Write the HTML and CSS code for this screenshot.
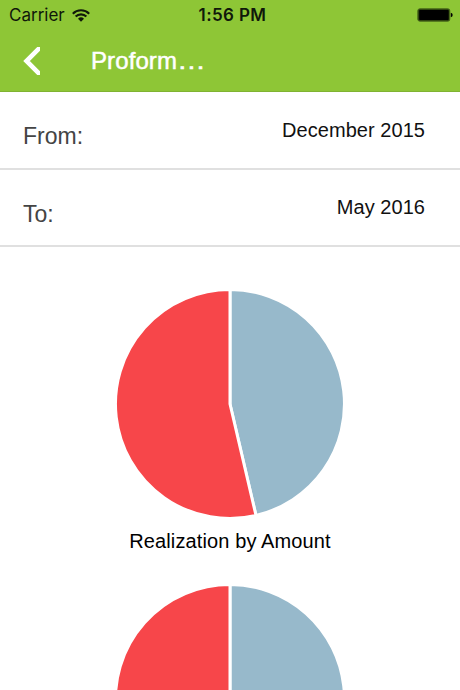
FILE: index.html
```html
<!DOCTYPE html>
<html lang="en">
<head>
  <meta charset="UTF-8">
  <meta name="viewport" content="width=device-width, initial-scale=1.0">
  <title>Proforma</title>

  <link rel="stylesheet" href="styles.css">
</head>
<body>
  <header class="header">
    <div class="status-bar">
      <div class="carrier">
        <span>Carrier</span>
        <svg class="wifi" width="18" height="13" viewBox="0 0 18 13" fill="none" stroke="#10180a" stroke-width="2.1">
          <path d="M0.8 4.7a11.6 11.6 0 0 1 16.4 0"/>
          <path d="M3.6 7.6a7.6 7.6 0 0 1 10.8 0"/>
          <path d="M6 9.7a4.3 4.3 0 0 1 6 0L9 12.8z" fill="#10180a" stroke="none"/>
        </svg>
      </div>
      <div class="time">1:56 PM</div>
      <svg class="battery" width="36" height="14" viewBox="0 0 36 14">
        <rect x="0.8" y="0.8" width="32" height="12.4" rx="2" fill="#26380c" stroke="#4a6a1b" stroke-width="1"/>
        <rect x="2.2" y="2" width="29.4" height="10" rx="0.8" fill="#000"/>
        <path d="M33.8 4.7q1.9 0.6 1.9 2.3t-1.9 2.3z" fill="#000"/>
      </svg>
    </div>
    <div class="nav-bar">
      <svg class="back" width="17" height="28" viewBox="0 0 17 28">
        <path d="M18 -0.5L3.5 14L18 28.5" fill="none" stroke="#fff" stroke-width="4.6"/>
      </svg>
      <h1 class="title">Proform<span class="dots">…</span></h1>
    </div>
  </header>

  <div class="row">
    <span class="label">From:</span>
    <span class="value">December 2015</span>
  </div>
  <div class="row">
    <span class="label">To:</span>
    <span class="value">May 2016</span>
  </div>

  <main class="charts">
    <figure class="chart">
      <svg class="pie" width="230" height="230" viewBox="-115 -115 230 230">
        <path class="slice blue" d="M0 0V-114.5A114.5 114.5 0 0 1 26 111.5Z"/>
        <path class="slice red" d="M0 0L26 111.5A114.5 114.5 0 1 1 0 -114.5Z"/>
      </svg>
      <figcaption class="caption">Realization by Amount</figcaption>
    </figure>
    <figure class="chart">
      <svg class="pie" width="230" height="230" viewBox="-115 -115 230 230">
        <path class="slice blue" d="M0 0V-114.5A114.5 114.5 0 0 1 26 111.5Z"/>
        <path class="slice red" d="M0 0L26 111.5A114.5 114.5 0 1 1 0 -114.5Z"/>
      </svg>
    </figure>
  </main>
</body>
</html>
```

FILE: styles.css
```css
* {
  box-sizing: border-box;
}
body {
  display: flex;
  flex-direction: column;
  margin: 0;
  height: 690px;
  overflow: hidden;
  font-family: "Liberation Sans", Arial, sans-serif;
  background-color: #fff;
  color: #111;
}
.header {
  flex: none;
  height: 92px;
  background-color: #8ec636;
  border-bottom: 1px solid #80b332;
}
.status-bar {
  display: grid;
  grid-template-columns: 1fr auto 1fr;
  align-items: center;
  height: 30px;
  padding: 0 7px 0 9px;
  font-family: Inter, sans-serif;
  font-size: 17px;
  color: #10180a;
}
.carrier {
  display: flex;
  align-items: center;
  gap: 7px;
}
.time {
  padding-left: 3px;
  font-weight: 600;
  letter-spacing: 0.4px;
}
.battery {
  justify-self: end;
}
.nav-bar {
  display: flex;
  align-items: center;
  height: 61px;
  padding-left: 23px;
}
.title {
  margin: 0 0 0 51px;
  font-size: 24px;
  font-weight: 400;
  line-height: 30px;
  letter-spacing: 0.1px;
  color: #fff;
  -webkit-text-stroke: 0.5px #fff;
}
.dots {
  display: inline-block;
  transform: scaleX(1.2);
  transform-origin: left;
}
.row {
  display: flex;
  flex: none;
  justify-content: space-between;
  height: 77.5px;
  padding: 0 35px 0 23px;
  border-bottom: 2px solid #e0e0e0;
}
.label {
  padding-top: 30px;
  font-size: 23px;
  line-height: 28px;
  color: #444;
}
.value {
  padding-top: 25.9px;
  font-size: 20px;
  line-height: 24px;
  letter-spacing: 0.05px;
}
.charts {
  flex: 1;
  min-height: 0;
  padding-top: 42px;
  overflow: hidden;
}
.chart {
  display: flex;
  flex-direction: column;
  align-items: center;
  height: 294.5px;
  margin: 0;
}
.slice {
  stroke: #fff;
  stroke-width: 3;
}
.blue {
  fill: #97b9cb;
}
.red {
  fill: #f7464a;
}
.caption {
  padding-top: 10px;
  font-size: 20px;
  line-height: 24px;
  letter-spacing: 0.12px;
  color: #000;
}
```
